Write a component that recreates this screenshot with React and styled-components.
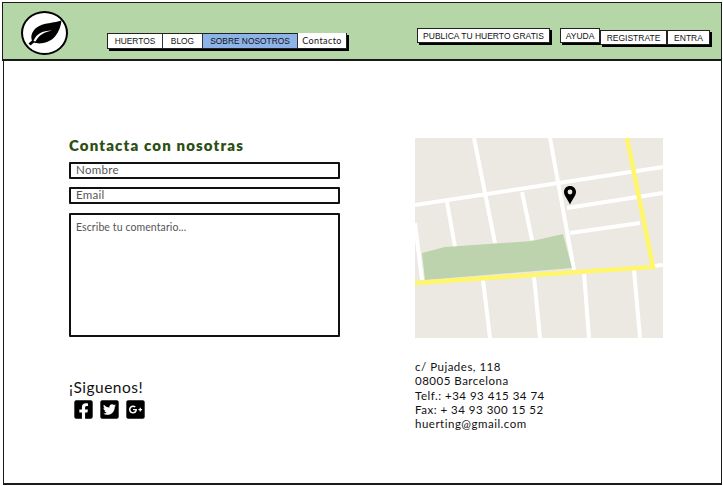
import styled, { createGlobalStyle } from "styled-components";
import { FaFacebookSquare, FaTwitterSquare, FaGooglePlusSquare } from "react-icons/fa";

const GlobalStyle = createGlobalStyle`
  html, body {
    margin: 0;
    padding: 0;
    background: #fff;
    font-family: "Lato", "Liberation Sans", sans-serif;
  }
  * {
    box-sizing: border-box;
  }
`;

const Page = styled.div`
  width: 723px;
  height: 486px;
  padding: 2px 1px 1px 2px;
  display: flex;
  flex-direction: column;
  overflow: hidden;
`;

const Header = styled.header`
  height: 59px;
  flex: none;
  background: #b5d6a7;
  border: 1.5px solid #1a1a1a;
  border-bottom-width: 2px;
  display: flex;
  align-items: flex-start;
  padding: 8px 10px 0 18px;
`;

const LogoCircle = styled.div`
  width: 47px;
  height: 44px;
  flex: none;
  background: #fff;
  border: 2px solid #000;
  border-radius: 50%;
  display: flex;
  align-items: center;
  justify-content: center;
`;

const Nav = styled.nav`
  display: flex;
  margin: 22px 0 0 39px;
  box-shadow: 2px 2px 0 #000;
  border: 1px solid #222;
`;

const NavItem = styled.a`
  width: ${(p) => p.$width}px;
  height: 14px;
  display: flex;
  align-items: center;
  justify-content: center;
  background: ${(p) => (p.$active ? "#8db3e8" : "#fff")};
  border-left: ${(p) => (p.$first ? "none" : "1px solid #333")};
  color: #111;
  font-family: "Liberation Sans", Arial, sans-serif;
  font-size: 8.4px;
`;

const ContactoItem = styled(NavItem)`
  font-family: "Lato", sans-serif;
  font-size: 9px;
  letter-spacing: 0.4px;
  margin: -1px 0 0;
  height: 15px;
  padding-bottom: 1px;
`;

const RightActions = styled.div`
  display: flex;
  margin: 17px 1px 0 auto;
  gap: 10px;
  align-items: flex-start;
`;

const SketchButton = styled.a`
  height: 15px;
  width: ${(p) => p.$width}px;
  display: flex;
  align-items: center;
  justify-content: center;
  background: #fff;
  border: 1px solid #222;
  box-shadow: 2px 2px 0 #000;
  color: #111;
  font-family: "Liberation Sans", Arial, sans-serif;
  font-size: 8.5px;
`;

const ButtonGroup = styled.div`
  display: flex;
  align-items: flex-start;
`;

const RaisedButton = styled(SketchButton)`
  margin-top: 2px;
`;

const Content = styled.main`
  flex: 1;
  margin-left: 1px;
  border: 1.5px solid #1a1a1a;
  border-top: none;
  border-bottom-width: 2px;
  display: grid;
  grid-template-columns: 271px 248px;
  column-gap: 75px;
  align-content: start;
  padding: 77px 0 0 65px;
`;

const Column = styled.section`
  display: flex;
  flex-direction: column;
`;

const Title = styled.h2`
  margin: -1px 0 9px;
  color: #2c4f14;
  font-size: 15px;
  line-height: 16px;
  font-weight: 800;
  letter-spacing: 1.15px;
`;

const Field = styled.input`
  display: block;
  width: 271px;
  height: ${(p) => p.$height}px;
  margin-bottom: ${(p) => p.$gap}px;
  padding: 0 5px 3px;
  border: 2px solid #111;
  border-radius: 1px;
  background: #fff;
  font: 11.5px "Lato", sans-serif;
  letter-spacing: 0.3px;
  &::placeholder {
    color: #555;
    opacity: 1;
  }
`;

const Comment = styled.textarea`
  display: block;
  width: 271px;
  height: 124px;
  padding: 6px 5px;
  border: 2px solid #111;
  border-radius: 1px;
  resize: none;
  font: 10.5px "Lato", sans-serif;
  letter-spacing: 0.1px;
  &::placeholder {
    color: #555;
    opacity: 1;
  }
`;

const Follow = styled.div`
  margin-top: 41px;
  color: #111;
  font-size: 15.5px;
  line-height: 18px;
  letter-spacing: 0.5px;
`;

const Socials = styled.div`
  display: flex;
  gap: 5px;
  margin: 3px 0 0 4px;
  color: #000;
  font-size: 21px;
  line-height: 0;
`;

const MapFrame = styled.svg`
  display: block;
  width: 248px;
  height: 200px;
`;

const Address = styled.address`
  margin-top: 22px;
  font-style: normal;
  font-size: 11.5px;
  line-height: 14.3px;
  letter-spacing: 0.5px;
  color: #111;
`;

const roads = [
  "M0 67L248 29",
  "M59 0L80 105",
  "M68 142L75 200",
  "M135 0L159 132",
  "M32 64L40 109",
  "M107 54L117 102",
  "M0 85L7 142",
  "M152 70L248 55",
  "M155 95L225 85",
  "M238 128L248 127",
  "M119 139L125 200",
  "M169 135L174 200",
  "M219 132L225 200",
];

const StreetMap = () => (
  <MapFrame viewBox="0 0 248 200">
    <rect width="248" height="200" fill="#ebe9e1" />
    {roads.map((d) => (
      <path key={d} d={d} stroke="#fff" strokeWidth="4" fill="none" />
    ))}
    <path d="M7 115L30 109L117 103L148 96L157 130L10 142Z" fill="#bdd3ad" />
    <path d="M0 145L238 129L212 0" stroke="#fff66b" strokeWidth="4.5" fill="none" />
    <path
      d="M155 48c-3.600 0-6 2.700-6 6c0 3.500 3.500 7 6 12.500c2.500-5.500 6-9 6-12.500c0-3.300-2.400-6-6-6z"
      fill="#000"
    />
    <circle cx="155" cy="54" r="2.400" fill="#ebe9e1" />
  </MapFrame>
);

const Leaf = () => (
  <svg width="34" height="26" viewBox="0 0 34 26">
    <path
      d="M33.500 0.500C27 3 15 2.500 8 8C3.500 12 2.500 17 4 20.500L0.500 23.500L2.500 25.500L6 22.500C11 24.500 21 23.500 27 16.500C31 11.500 33 6 33.500 0.500Z"
      fill="#000"
    />
    <path d="M5.500 21C8 14.500 14 10.500 24 10.500C16 12 11 15 7.500 21.500Z" fill="#fff" />
  </svg>
);

export default function App() {
  return (
    <Page>
      <GlobalStyle />
      <Header>
        <LogoCircle>
          <Leaf />
        </LogoCircle>
        <Nav>
          <NavItem $first $width={54}>HUERTOS</NavItem>
          <NavItem $width={40}>BLOG</NavItem>
          <NavItem $active $width={95}>SOBRE NOSOTROS</NavItem>
          <ContactoItem $width={49}>Contacto</ContactoItem>
        </Nav>
        <RightActions>
          <SketchButton $width={133}>PUBLICA TU HUERTO GRATIS</SketchButton>
          <ButtonGroup>
            <SketchButton $width={40}>AYUDA</SketchButton>
            <RaisedButton $width={67}>REGISTRATE</RaisedButton>
            <RaisedButton $width={43}>ENTRA</RaisedButton>
          </ButtonGroup>
        </RightActions>
      </Header>
      <Content>
        <Column>
          <Title>Contacta con nosotras</Title>
          <Field $height={17} $gap={8} placeholder="Nombre" />
          <Field $height={17} $gap={9} placeholder="Email" />
          <Comment placeholder="Escribe tu comentario..." />
          <Follow>¡Siguenos!</Follow>
          <Socials>
            <FaFacebookSquare />
            <FaTwitterSquare />
            <FaGooglePlusSquare />
          </Socials>
        </Column>
        <Column>
          <StreetMap />
          <Address>
            c/ Pujades, 118
            <br />
            08005 Barcelona
            <br />
            Telf.: +34 93 415 34 74
            <br />
            Fax: + 34 93 300 15 52
            <br />
            huerting@gmail.com
          </Address>
        </Column>
      </Content>
    </Page>
  );
}
